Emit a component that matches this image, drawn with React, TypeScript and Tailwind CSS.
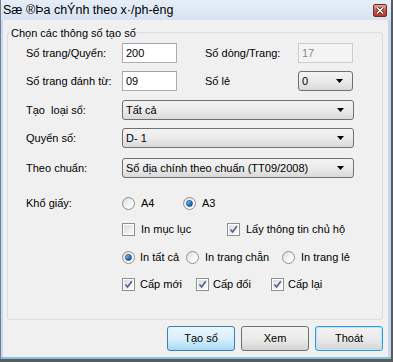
import React from 'react';

const font = { fontFamily: '"Liberation Sans", Arial, sans-serif' };

function Radio({ checked }: { checked?: boolean }) {
  return (
    <span className="relative flex h-[13px] w-[13px] shrink-0 items-center justify-center rounded-full border border-[#8f8f8f] bg-gradient-to-br from-[#d8d8d8] via-[#f4f4f4] to-[#ffffff]">
      {checked && (
        <span className="h-[7px] w-[7px] rounded-full border border-[#1b4f88] bg-gradient-to-br from-[#9fd6f7] via-[#2f86c9] to-[#0e4a8b]" />
      )}
    </span>
  );
}

function Check({ checked }: { checked?: boolean }) {
  return (
    <span className="flex h-[13px] w-[13px] shrink-0 items-center justify-center border border-[#8e8f8f] bg-white p-[1px]">
      <span className="flex h-full w-full items-center justify-center bg-gradient-to-br from-[#dcdcdc] to-[#fbfbfb]">
        {checked && (
          <svg width="9" height="9" viewBox="0 0 9 9">
            <path d="M1.5 4.5 L3.6 7 L7.8 1.2" fill="none" stroke="#4d5d91" strokeWidth="1.6" />
          </svg>
        )}
      </span>
    </span>
  );
}

function Select({ value, w }: { value: string; w: string }) {
  return (
    <div className={`flex h-[20px] ${w} items-center justify-between rounded-[3px] border border-[#707070] bg-gradient-to-b from-[#f3f3f3] via-[#ebebeb] to-[#d9d9d9] pl-[3px] pr-[9px]`}>
      <span>{value}</span>
      <svg width="7" height="4" viewBox="0 0 7 4">
        <path d="M0 0 H7 L3.5 4 Z" fill="#000" />
      </svg>
    </div>
  );
}

function Input({ value, disabled }: { value: string; disabled?: boolean }) {
  return (
    <div
      className={`flex h-[20px] w-[55px] items-center border pl-[3px] ${
        disabled
          ? 'border-[#c9ccd0] bg-[#f4f4f4] text-[#8a8a8a]'
          : 'border-[#abadb3] border-t-[#9fa3ab] bg-white'
      }`}
    >
      {value}
    </div>
  );
}

function Button({ label, kind }: { label: string; kind: 'hot' | 'plain' | 'default' }) {
  const cls =
    kind === 'hot'
      ? 'border-[#3c7fb1] bg-gradient-to-b from-[#eaf6fd] via-[#d9f0fc] to-[#a7d9f5]'
      : kind === 'default'
      ? 'border-[#3399dd] bg-gradient-to-b from-[#f2f2f2] via-[#ebebeb] to-[#d4d4d4] shadow-[inset_0_0_0_1px_#b9e4fb]'
      : 'border-[#707070] bg-gradient-to-b from-[#f2f2f2] via-[#ebebeb] to-[#d4d4d4]';
  return (
    <div className={`flex h-[25px] w-[68px] items-center justify-center rounded-[3px] border ${cls}`}>
      {label}
    </div>
  );
}

export default function App() {
  return (
    <div className="h-[362px] w-[393px] bg-[#5a5a5a] text-[11px] text-black" style={font}>
      <div className="flex h-[359px] w-[391px] flex-col border-l border-[#6d7f93] bg-[#c5d8ec]">
        <div className="flex h-[20px] items-center justify-between bg-gradient-to-b from-[#e6eef7] to-[#d6e3f1] pl-[2px] pr-[4px]">
          <span className="text-[12.5px] text-black">Sæ ®Þa chÝnh theo x·/ph-êng</span>
          <span className="flex h-[13px] w-[14px] items-center justify-center rounded-[2px] border border-[#6d2b25] bg-gradient-to-b from-[#e4a79c] via-[#c9574a] to-[#b8362a]">
            <svg width="8" height="7" viewBox="0 0 8 7">
              <path d="M1 0.5 L7 6.5 M7 0.5 L1 6.5" stroke="#3d1410" strokeWidth="3" />
              <path d="M1 0.5 L7 6.5 M7 0.5 L1 6.5" stroke="#ffffff" strokeWidth="1.6" />
            </svg>
          </span>
        </div>
        <div className="ml-[2px] mr-[3px] flex flex-1 flex-col bg-[#f0f0f0] pl-[4px] pr-[3px]">
          <div className="relative mt-[12px] h-[288px] w-[376px] rounded-[3px] border border-[#d5dfe5] pl-[18px]">
            <span className="absolute -top-[8px] left-[2px] bg-[#f0f0f0] px-[1px]">Chọn các thông số tạo số</span>

            <div className="mt-[10px] flex h-[20px] items-center">
              <span className="w-[96px]">Số trang/Quyển:</span>
              <Input value="200" />
              <span className="ml-[28px] w-[93px]">Số dòng/Trang:</span>
              <Input value="17" disabled />
            </div>

            <div className="mt-[8px] flex h-[20px] items-center">
              <span className="w-[96px]">Số trang đánh từ:</span>
              <Input value="09" />
              <span className="ml-[28px] w-[93px]">Số lẻ</span>
              <Select value="0" w="w-[55px]" />
            </div>

            <div className="mt-[9px] flex h-[20px] items-center">
              <span className="w-[96px] whitespace-pre">Tạo  loại sổ:</span>
              <Select value="Tất cả" w="w-[232px]" />
            </div>

            <div className="mt-[8px] flex h-[20px] items-center">
              <span className="w-[96px]">Quyển số:</span>
              <Select value="D- 1" w="w-[232px]" />
            </div>

            <div className="mt-[10px] flex h-[20px] items-center">
              <span className="w-[96px]">Theo chuẩn:</span>
              <Select value="Sổ địa chính theo chuẩn (TT09/2008)" w="w-[232px]" />
            </div>

            <div className="mt-[17px] flex h-[16px] items-center">
              <span className="w-[96px]">Khổ giấy:</span>
              <Radio />
              <span className="ml-[6px] w-[42px]">A4</span>
              <Radio checked />
              <span className="ml-[6px]">A3</span>
            </div>

            <div className="mt-[10px] flex h-[16px] items-center pl-[96px]">
              <Check />
              <span className="ml-[6px] w-[86px]">In mục lục</span>
              <Check checked />
              <span className="ml-[6px]">Lấy thông tin chủ hộ</span>
            </div>

            <div className="mt-[12px] flex h-[16px] items-center pl-[96px]">
              <Radio checked />
              <span className="ml-[5px] w-[46px]">In tất cả</span>
              <Radio />
              <span className="ml-[6px] w-[77px]">In trang chẵn</span>
              <Radio />
              <span className="ml-[6px]">In trang lẻ</span>
            </div>

            <div className="mt-[11px] flex h-[16px] items-center pl-[96px]">
              <Check checked />
              <span className="ml-[5px] w-[56px]">Cấp mới</span>
              <Check checked />
              <span className="ml-[4px] w-[58px]">Cấp đổi</span>
              <Check checked />
              <span className="ml-[4px]">Cấp lại</span>
            </div>
          </div>

          <div className="mt-[6px] flex w-[376px] justify-end gap-[6px]">
            <Button label="Tạo sổ" kind="hot" />
            <Button label="Xem" kind="plain" />
            <Button label="Thoát" kind="default" />
          </div>
        </div>
        <div className="h-[2px] bg-[#7fc3e6]" />
      </div>
    </div>
  );
}
